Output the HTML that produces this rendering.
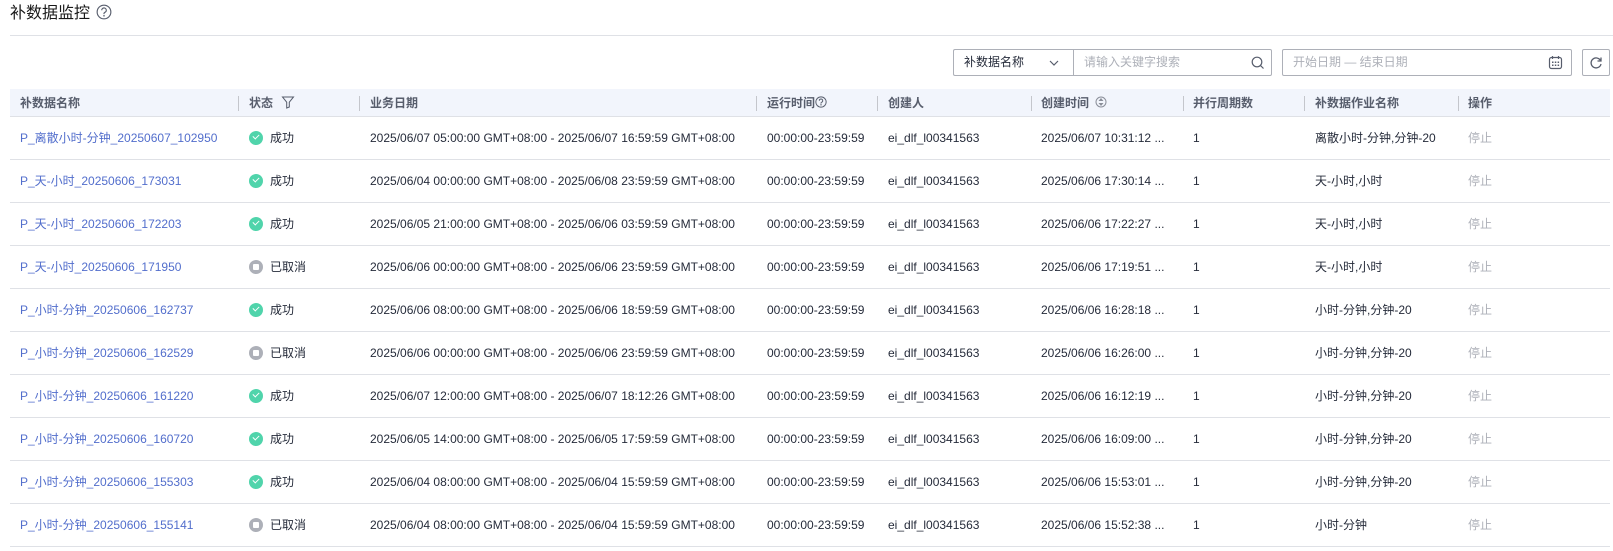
<!DOCTYPE html>
<html><head><meta charset="utf-8"><style>
*{box-sizing:border-box;margin:0;padding:0}
body{width:1613px;height:551px;background:#fff;font-family:"Liberation Sans","Noto Sans CJK SC",sans-serif;font-size:12px;color:#252b3a;position:relative;overflow:hidden}
.a{position:absolute;white-space:nowrap}
.title{left:10px;top:3px;font-size:16px;color:#191919;line-height:22px}
.hr{left:10px;top:35px;width:1603px;height:1px;background:#dfe1e6}
.box{border:1px solid #adb0b8;border-radius:2px;height:27px;top:49px}
.ph{color:#adb0b8;line-height:25px}
.head{left:10px;top:89px;width:1600px;height:28px;background:#f2f5fc;border-bottom:1px solid #dfe1e6}
.th{top:89px;line-height:28px;font-weight:bold;color:#575d6c}
.dv{top:96px;width:1px;height:15px;background:#c4c6cc}
.row{left:10px;width:1600px;height:43px;border-bottom:1px solid #dfe1e6}
.c{line-height:43px}
.lnk{color:#526ecc}
.ok{width:14px;height:14px;border-radius:50%;background:#50d4ab;display:inline-block;vertical-align:middle;position:relative;margin-right:7px;top:-1px}
.ok:after{content:"";position:absolute;left:4px;top:3px;width:5px;height:3px;border-left:1.5px solid #fff;border-bottom:1.5px solid #fff;transform:rotate(-45deg)}
.cn{width:14px;height:14px;border-radius:50%;background:#adb0b8;display:inline-block;vertical-align:middle;position:relative;margin-right:7px;top:-1px}
.cn:after{content:"";position:absolute;left:4px;top:4px;width:6px;height:6px;background:#fff;border-radius:1px}
.stop{color:#adb0b8}
</style></head><body>
<div class="a title">补数据监控 <svg width="16" height="16" viewBox="0 0 14 14" style="vertical-align:-2px;margin-left:2px"><circle cx="7" cy="7" r="6" fill="none" stroke="#575d6c" stroke-width="1"/><path d="M5 5.5a2 2 0 1 1 2.6 1.9c-.4.2-.6.5-.6.9v.6" fill="none" stroke="#575d6c" stroke-width="1"/><circle cx="7" cy="10.3" r=".7" fill="#575d6c"/></svg></div>
<div class="a hr"></div>

<div class="a box" style="left:953px;width:120px;border-right:none;border-radius:2px 0 0 2px"><span class="a" style="left:10px;line-height:25px;color:#252b3a">补数据名称</span>
<svg class="a" style="left:94px;top:8px" width="12" height="10" viewBox="0 0 12 10"><path d="M2 3l4 4 4-4" fill="none" stroke="#575d6c" stroke-width="1.2"/></svg></div>
<div class="a box" style="left:1073px;width:199px;border-radius:0 2px 2px 0"><span class="a ph" style="left:10px">请输入关键字搜索</span>
<svg class="a" style="left:177px;top:6px" width="14" height="14" viewBox="0 0 14 14"><circle cx="6" cy="6" r="4.8" fill="none" stroke="#575d6c" stroke-width="1.2"/><path d="M9.5 9.5l3 3" stroke="#575d6c" stroke-width="1.2"/></svg></div>
<div class="a box" style="left:1282px;width:290px"><span class="a ph" style="left:10px">开始日期 — 结束日期</span>
<svg class="a" style="left:265px;top:5px" width="15" height="15" viewBox="0 0 15 15"><rect x="1.5" y="2.5" width="12" height="11" rx="2" fill="none" stroke="#575d6c" stroke-width="1.2"/><path d="M4.5 1v3M10.5 1v3" stroke="#575d6c" stroke-width="1.2"/><g fill="#575d6c"><rect x="4" y="6.5" width="1.5" height="1.5"/><rect x="6.8" y="6.5" width="1.5" height="1.5"/><rect x="9.6" y="6.5" width="1.5" height="1.5"/><rect x="4" y="9.5" width="1.5" height="1.5"/><rect x="6.8" y="9.5" width="1.5" height="1.5"/><rect x="9.6" y="9.5" width="1.5" height="1.5"/></g></svg></div>
<div class="a box" style="left:1582px;width:28px"><svg class="a" style="left:6px;top:6px" width="14" height="14" viewBox="0 0 14 14"><path d="M11.5 4.5A5 5 0 1 0 12 8" fill="none" stroke="#575d6c" stroke-width="1.3"/><path d="M12 1.5v3.5H8.5" fill="none" stroke="#575d6c" stroke-width="1.3"/></svg></div>

<div class="a head"></div>
<div class="a th" style="left:20px">补数据名称</div>
<div class="a dv" style="left:238px"></div>
<div class="a th" style="left:249px">状态 <svg width="14" height="14" viewBox="0 0 14 14" style="vertical-align:-2px;margin-left:5px"><path d="M1.5 2h11L8.3 7.2V12L5.7 13V7.2z" fill="none" stroke="#575d6c" stroke-width="1"/></svg></div>
<div class="a dv" style="left:359px"></div>
<div class="a th" style="left:370px">业务日期</div>
<div class="a dv" style="left:756px"></div>
<div class="a th" style="left:767px">运行时间 <svg width="12" height="12" viewBox="0 0 14 14" style="vertical-align:-1px;margin-left:-3px"><circle cx="7" cy="7" r="6" fill="none" stroke="#575d6c" stroke-width="1.1"/><path d="M5 5.5a2 2 0 1 1 2.6 1.9c-.4.2-.6.5-.6.9v.6" fill="none" stroke="#575d6c" stroke-width="1.1"/><circle cx="7" cy="10.3" r=".8" fill="#575d6c"/></svg></div>
<div class="a dv" style="left:877px"></div>
<div class="a th" style="left:888px">创建人</div>
<div class="a dv" style="left:1031px"></div>
<div class="a th" style="left:1041px">创建时间 <svg width="12" height="14" viewBox="0 0 12 14" style="vertical-align:-2px;margin-left:3px"><circle cx="6" cy="7" r="5" fill="none" stroke="#8a8e99" stroke-width="1"/><path d="M3.5 6l2.5-3 2.5 3zM3.5 8l2.5 3 2.5-3z" fill="#8a8e99"/></svg></div>
<div class="a dv" style="left:1183px"></div>
<div class="a th" style="left:1193px">并行周期数</div>
<div class="a dv" style="left:1304px"></div>
<div class="a th" style="left:1315px">补数据作业名称</div>
<div class="a dv" style="left:1458px"></div>
<div class="a th" style="left:1468px">操作</div>

<div id="rows"></div>
<script>
var d=[
["P_离散小时-分钟_20250607_102950",1,"2025/06/07 05:00:00 GMT+08:00 - 2025/06/07 16:59:59 GMT+08:00","2025/06/07 10:31:12 ...","离散小时-分钟,分钟-20"],
["P_天-小时_20250606_173031",1,"2025/06/04 00:00:00 GMT+08:00 - 2025/06/08 23:59:59 GMT+08:00","2025/06/06 17:30:14 ...","天-小时,小时"],
["P_天-小时_20250606_172203",1,"2025/06/05 21:00:00 GMT+08:00 - 2025/06/06 03:59:59 GMT+08:00","2025/06/06 17:22:27 ...","天-小时,小时"],
["P_天-小时_20250606_171950",0,"2025/06/06 00:00:00 GMT+08:00 - 2025/06/06 23:59:59 GMT+08:00","2025/06/06 17:19:51 ...","天-小时,小时"],
["P_小时-分钟_20250606_162737",1,"2025/06/06 08:00:00 GMT+08:00 - 2025/06/06 18:59:59 GMT+08:00","2025/06/06 16:28:18 ...","小时-分钟,分钟-20"],
["P_小时-分钟_20250606_162529",0,"2025/06/06 00:00:00 GMT+08:00 - 2025/06/06 23:59:59 GMT+08:00","2025/06/06 16:26:00 ...","小时-分钟,分钟-20"],
["P_小时-分钟_20250606_161220",1,"2025/06/07 12:00:00 GMT+08:00 - 2025/06/07 18:12:26 GMT+08:00","2025/06/06 16:12:19 ...","小时-分钟,分钟-20"],
["P_小时-分钟_20250606_160720",1,"2025/06/05 14:00:00 GMT+08:00 - 2025/06/05 17:59:59 GMT+08:00","2025/06/06 16:09:00 ...","小时-分钟,分钟-20"],
["P_小时-分钟_20250606_155303",1,"2025/06/04 08:00:00 GMT+08:00 - 2025/06/04 15:59:59 GMT+08:00","2025/06/06 15:53:01 ...","小时-分钟,分钟-20"],
["P_小时-分钟_20250606_155141",0,"2025/06/04 08:00:00 GMT+08:00 - 2025/06/04 15:59:59 GMT+08:00","2025/06/06 15:52:38 ...","小时-分钟"]];
var h="";
d.forEach(function(r,i){var t=117+i*43;
h+='<div class="a row" style="top:'+t+'px"></div>';
var c=function(x,s,cl){h+='<div class="a c '+(cl||'')+'" style="left:'+x+'px;top:'+t+'px">'+s+'</div>';};
c(20,r[0],'lnk');
c(249,r[1]?'<span class="ok"></span>成功':'<span class="cn"></span>已取消');
c(370,r[2]);c(767,'00:00:00-23:59:59');c(888,'ei_dlf_l00341563');c(1041,r[3]);c(1193,'1');c(1315,r[4]);c(1468,'停止','stop');
});
document.getElementById('rows').innerHTML=h;
</script>
</body></html>
